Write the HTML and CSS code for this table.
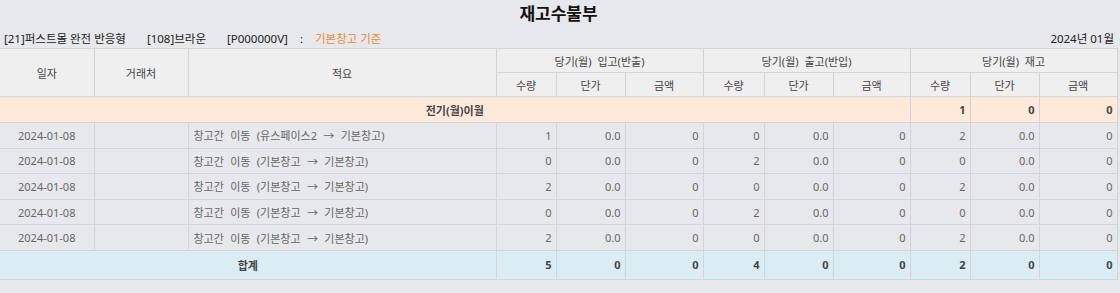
FILE: index.html
```html
<!DOCTYPE html>
<html lang="ko">
<head>
<meta charset="utf-8">
<title>재고수불부</title>
<link rel="stylesheet" href="styles.css">
</head>
<body>
<div class="page">
  <h1 class="title">재고수불부</h1>
  <div class="info">
    <span>[21]퍼스트몰 완전 반응형</span>
    <span class="gap-l">[108]브라운</span>
    <span class="gap-l">[P000000V]</span>
    <span class="gap-s">:</span>
    <span class="gap-s accent">기본창고 기준</span>
    <span class="period">2024년 01월</span>
  </div>
  <table class="ledger">
    <colgroup>
      <col class="w94"><col class="w94"><col class="w308">
      <col class="w60"><col class="w69"><col class="w78">
      <col class="w61"><col class="w69"><col class="w77">
      <col class="w60"><col class="w69"><col class="w78">
    </colgroup>
    <thead>
      <tr class="hr1">
        <th rowspan="2" class="first">일자</th>
        <th rowspan="2">거래처</th>
        <th rowspan="2">적요</th>
        <th colspan="3">당기(월) 입고(반출)</th>
        <th colspan="3">당기(월) 출고(반입)</th>
        <th colspan="3">당기(월) 재고</th>
      </tr>
      <tr class="hr2">
        <th>수량</th><th>단가</th><th>금액</th>
        <th>수량</th><th>단가</th><th>금액</th>
        <th>수량</th><th>단가</th><th>금액</th>
      </tr>
    </thead>
    <tbody>
      <tr class="carry">
        <td colspan="9" class="first center">전기(월)이월</td>
        <td class="num">1</td><td class="num">0</td><td class="num">0</td>
      </tr>
      <tr class="row">
        <td class="first center">2024-01-08</td><td></td><td class="memo">창고간 이동 (유스페이스2 → 기본창고)</td>
        <td class="num">1</td><td class="num">0.0</td><td class="num">0</td>
        <td class="num">0</td><td class="num">0.0</td><td class="num">0</td>
        <td class="num">2</td><td class="num">0.0</td><td class="num">0</td>
      </tr>
      <tr class="row">
        <td class="first center">2024-01-08</td><td></td><td class="memo">창고간 이동 (기본창고 → 기본창고)</td>
        <td class="num">0</td><td class="num">0.0</td><td class="num">0</td>
        <td class="num">2</td><td class="num">0.0</td><td class="num">0</td>
        <td class="num">0</td><td class="num">0.0</td><td class="num">0</td>
      </tr>
      <tr class="row">
        <td class="first center">2024-01-08</td><td></td><td class="memo">창고간 이동 (기본창고 → 기본창고)</td>
        <td class="num">2</td><td class="num">0.0</td><td class="num">0</td>
        <td class="num">0</td><td class="num">0.0</td><td class="num">0</td>
        <td class="num">2</td><td class="num">0.0</td><td class="num">0</td>
      </tr>
      <tr class="row">
        <td class="first center">2024-01-08</td><td></td><td class="memo">창고간 이동 (기본창고 → 기본창고)</td>
        <td class="num">0</td><td class="num">0.0</td><td class="num">0</td>
        <td class="num">2</td><td class="num">0.0</td><td class="num">0</td>
        <td class="num">0</td><td class="num">0.0</td><td class="num">0</td>
      </tr>
      <tr class="row">
        <td class="first center">2024-01-08</td><td></td><td class="memo">창고간 이동 (기본창고 → 기본창고)</td>
        <td class="num">2</td><td class="num">0.0</td><td class="num">0</td>
        <td class="num">0</td><td class="num">0.0</td><td class="num">0</td>
        <td class="num">2</td><td class="num">0.0</td><td class="num">0</td>
      </tr>
      <tr class="total">
        <td colspan="3" class="first center">합계</td>
        <td class="num">5</td><td class="num">0</td><td class="num">0</td>
        <td class="num">4</td><td class="num">0</td><td class="num">0</td>
        <td class="num">2</td><td class="num">0</td><td class="num">0</td>
      </tr>
    </tbody>
  </table>
</div>
</body>
</html>
```

FILE: styles.css
```css
html, body {
  margin: 0;
  padding: 0;
  background: #e6e8eb;
}

body {
  font-family: "Noto Sans", "Noto Sans CJK KR", sans-serif;
  color: #333;
}

.page {
  width: 1117px;
}

.title {
  margin: 0;
  height: 28px;
  line-height: 28px;
  font-size: 17px;
  font-weight: bold;
  text-align: center;
  color: #111;
}

.info {
  display: flex;
  align-items: center;
  height: 20px;
  padding: 0 3px 0 4px;
  font-size: 11.5px;
  color: #222;
}

.gap-l { margin-left: 21px; }
.gap-s { margin-left: 12px; }
.accent { color: #f08a34; }
.period { margin-left: auto; }

.ledger {
  width: 1117px;
  table-layout: fixed;
  border-collapse: collapse;
  font-size: 11px;
}

.w94 { width: 94px; }
.w308 { width: 308px; }
.w60 { width: 60px; }
.w61 { width: 61px; }
.w69 { width: 69px; }
.w77 { width: 77px; }
.w78 { width: 78px; }

.ledger th,
.ledger td {
  border: 1px solid #d3d4d6;
  padding: 0 5px;
  white-space: nowrap;
  overflow: hidden;
}

.ledger th {
  background: #efefef;
  color: #444;
  font-weight: normal;
  font-size: 11px;
  word-spacing: 3px;
  text-align: center;
}

.ledger .first { border-left: 0; }

.hr1 { height: 24px; }
.hr2 { height: 24px; }

.hr2 th:first-child { border-left: 1px solid #d3d4d6; }

.row { height: 25.6px; color: #666; }
.row td { color: #666; }

.carry { height: 26px; background: #ffe9da; }
.carry td { color: #444; font-weight: bold; }

.total { height: 29px; background: #dbedf4; }
.total td { color: #444; font-weight: bold; }

.center { text-align: center; }
.num { text-align: right; }
.ledger td.num { padding-right: 4px; }
.memo { text-align: left; word-spacing: 3.5px; }
```
